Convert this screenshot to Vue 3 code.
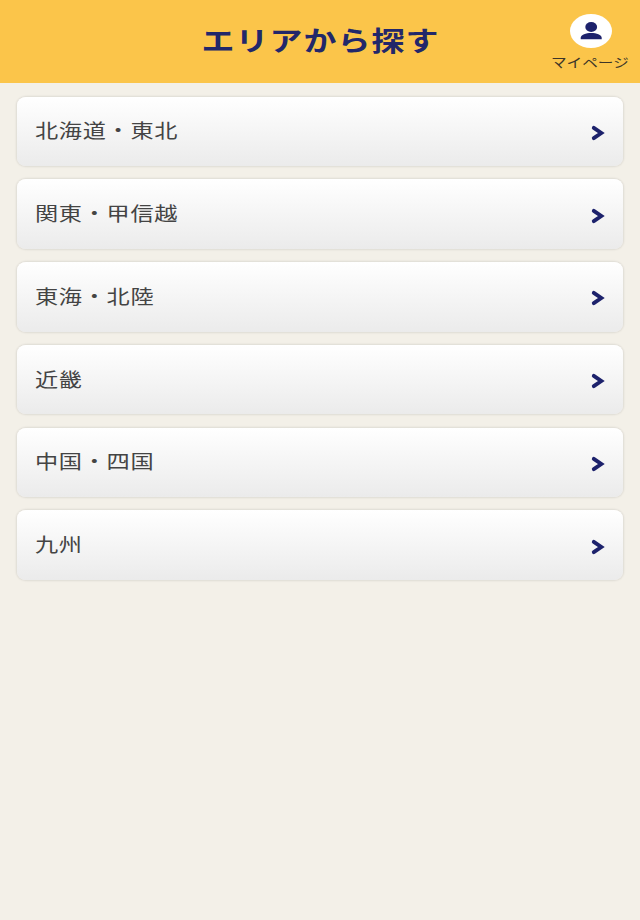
<script setup>
const areas = ['北海道・東北', '関東・甲信越', '東海・北陸', '近畿', '中国・四国', '九州']
</script>

<template>
  <div class="page">
    <header class="header">
      <span></span>
      <h1 class="title"><span class="wide">エリアから探す</span></h1>
      <a class="mypage">
        <svg class="avatar" viewBox="0 0 42 34">
          <ellipse cx="21" cy="17" rx="21" ry="17" fill="#fff" />
          <ellipse cx="21.2" cy="13" rx="5.9" ry="4.9" fill="#1d226c" />
          <path d="M10.7 25.2V23.8C10.7 20.8 16 19 21.2 19S31.7 20.8 31.7 23.8V25.2Z" fill="#1d226c" />
        </svg>
        <span class="wide mypage-label">マイページ</span>
      </a>
    </header>
    <ul class="list">
      <li v-for="area in areas" :key="area" class="item">
        <span class="wide label">{{ area }}</span>
        <svg class="chevron" viewBox="0 0 14 16">
          <path d="M2.8 2.8L10.3 8L2.8 13.2" fill="none" stroke="#1d226c" stroke-width="3.9" stroke-linecap="round" />
        </svg>
      </li>
    </ul>
  </div>
</template>

<style>
body {
  margin: 0;
  background: #f3f0e8;
}
</style>

<style scoped>
.page {
  min-height: 920px;
  background: #f3f0e8;
  font-family: "Noto Sans CJK JP", sans-serif;
}
.header {
  box-sizing: border-box;
  height: 83px;
  display: grid;
  grid-template-columns: 100px 1fr 100px;
  background: #fbc54a;
}
.wide {
  display: inline-block;
  white-space: nowrap;
  transform: scaleX(1.22);
}
.title {
  margin: 0;
  padding-top: 20px;
  text-align: center;
  font-size: 27px;
  line-height: 40px;
  letter-spacing: 0.85px;
  font-weight: 700;
  color: #22276a;
}
.mypage {
  display: flex;
  flex-direction: column;
  align-items: center;
  padding-top: 14px;
  color: #3c3528;
}
.avatar {
  width: 42px;
  height: 34px;
  margin-left: 2px;
}
.mypage-label {
  margin-top: 4px;
  font-size: 12.8px;
  line-height: 20px;
}
.list {
  list-style: none;
  margin: 0;
  padding: 13.5px 17px 0 16.5px;
  display: flex;
  flex-direction: column;
  gap: 13.3px;
}
.item {
  box-sizing: border-box;
  height: 69.5px;
  padding: 0 18px 0 18px;
  display: flex;
  align-items: center;
  justify-content: space-between;
  border-radius: 9px / 8px;
  background: linear-gradient(#fff, #ebebeb);
  box-shadow: 0 0 2px 1px rgba(0, 0, 0, 0.09);
}
.label {
  transform-origin: left center;
  margin-bottom: 2px;
  font-size: 19px;
  line-height: 30px;
  letter-spacing: 0.55px;
  color: #444;
}
.chevron {
  width: 14px;
  height: 16px;
  margin-top: 3px;
}
</style>
